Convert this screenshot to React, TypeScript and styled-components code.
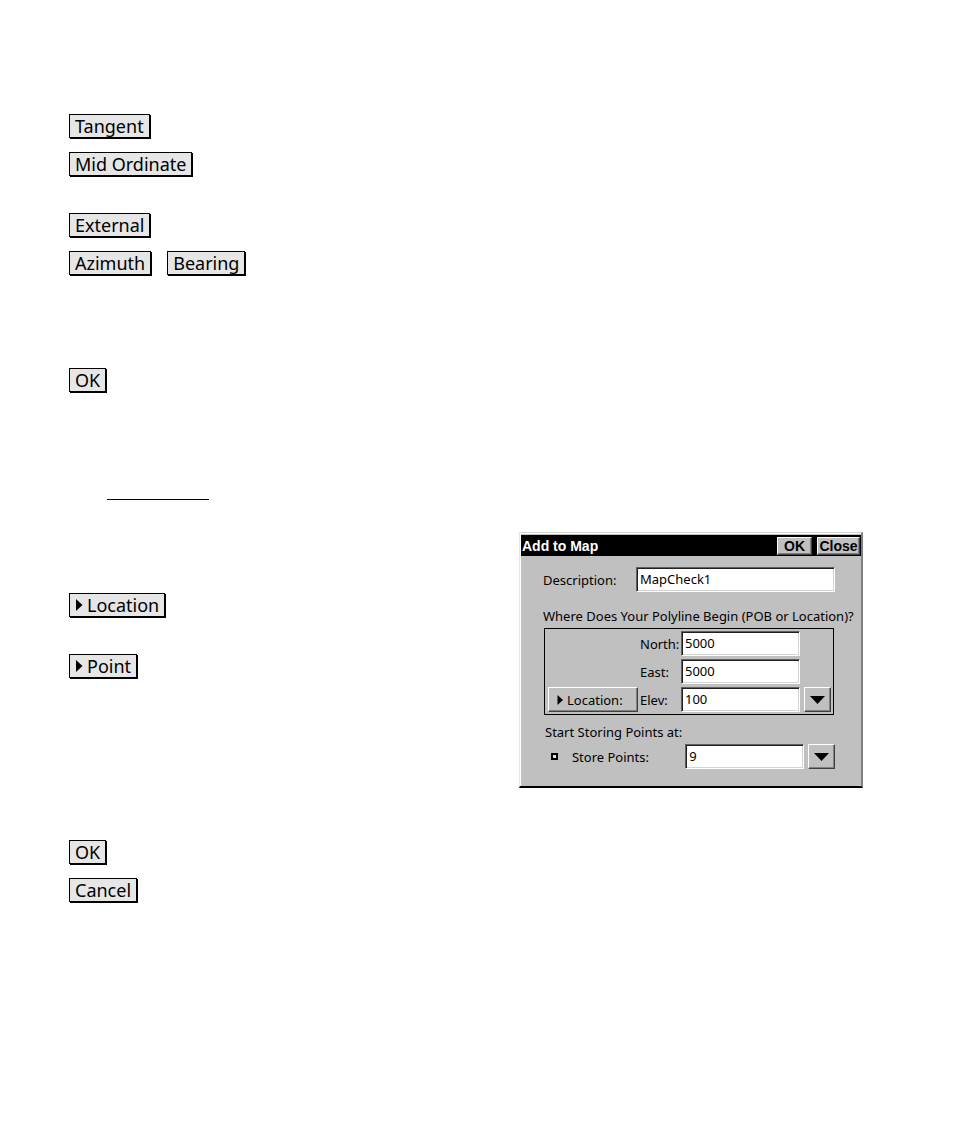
import React from "react";
import styled, { createGlobalStyle, css } from "styled-components";

const GlobalStyle = createGlobalStyle`
  *, *::before, *::after { box-sizing: border-box; }
  body { margin: 0; background: #fff; color: #000; }
  body, button, input { font-family: "Noto Sans", sans-serif; }
`;

const Page = styled.main`
  padding: 114px 91px 48px 69px;
`;

const KeyRow = styled.div<{ $after?: number }>`
  display: flex;
  gap: 16px;
  height: 24px;
  margin-bottom: ${(p) => p.$after ?? 14}px;
`;

const Key = styled.button`
  display: inline-flex;
  align-items: center;
  gap: 4px;
  height: 24px;
  padding: 0 5px;
  border: 1px solid #000;
  border-radius: 0;
  background: #e6e6e6;
  box-shadow: 1px 1px 0 #000;
  color: #000;
  font-size: 18px;
  line-height: 22px;
  white-space: nowrap;
`;

const Rule = styled.hr`
  width: 102px;
  height: 1px;
  margin: 0 0 32px 38px;
  border: 0;
  background: #000;
`;

const Columns = styled.div`
  display: flex;
  align-items: flex-start;
  justify-content: space-between;
  margin-bottom: 52px;
`;

const SideKeys = styled.div`
  padding-top: 61px;
`;

const Dialog = styled.section`
  width: 344px;
  flex: none;
  padding: 1px 0 0;
  border-style: solid;
  border-width: 1px 2px 2px 1px;
  border-color: #d4d4d4 #808080 #000 #e8e8e8;
  background: #c0c0c0;
  box-shadow: inset 1px 1px 0 #fff;
  font-size: 13px;
  line-height: 18px;
`;

const TitleBar = styled.header`
  display: flex;
  align-items: center;
  gap: 5px;
  height: 21px;
  margin: 1px 0 0 1px;
  padding: 0 1px;
  background: #000;
`;

const Title = styled.h1`
  flex: 1;
  margin: 0;
  color: #fff;
  font: bold 14px/18px "Liberation Sans", sans-serif;
`;

const raised = css`
  border: 1px solid;
  border-color: #fff #404040 #404040 #fff;
  border-radius: 0;
  background: #c0c0c0;
  box-shadow: inset -1px -1px 0 #808080;
  color: #000;
`;

const TitleButton = styled.button<{ $width: number }>`
  ${raised}
  width: ${(p) => p.$width}px;
  height: 18px;
  padding: 0;
  font: bold 14px/16px "Liberation Sans", sans-serif;
`;

const Form = styled.form`
  padding: 11px 26px 17px 23px;
`;

const DescriptionRow = styled.div`
  display: flex;
  align-items: center;
  justify-content: space-between;
`;

const Field = styled.input<{ $width: number }>`
  width: ${(p) => p.$width}px;
  height: 25px;
  padding: 0 3px 2px;
  border: 1px solid;
  border-color: #606060 #fff #fff #606060;
  border-radius: 0;
  background: #fff;
  box-shadow: inset 1px 1px 0 #202020, inset -1px -1px 0 #d4d4d4;
  color: #000;
  font-size: 13px;
  line-height: 18px;
`;

const Question = styled.p`
  margin: 15px 0 3px;
  white-space: nowrap;
`;

const Origin = styled.fieldset`
  display: grid;
  grid-template-columns: 90px 43px 119px 31px;
  grid-template-rows: repeat(3, 25px);
  row-gap: 3px;
  align-items: center;
  width: 290px;
  margin: 0 0 0 1px;
  padding: 2px 2px 2px 3px;
  border: 1px solid #000;
`;

const CoordLabel = styled.label`
  grid-column: 2;
  padding-left: 2px;
  white-space: nowrap;
`;

const LocationButton = styled.button`
  ${raised}
  grid-column: 1;
  grid-row: 3;
  display: flex;
  align-items: center;
  gap: 4px;
  height: 25px;
  padding: 0 8px;
  font-size: 13px;
  line-height: 18px;
`;

const DropButton = styled.button`
  ${raised}
  display: flex;
  align-items: center;
  justify-content: center;
  width: 27px;
  height: 25px;
  padding: 0;
  margin-left: 4px;
`;

const StoreHeading = styled.p`
  margin: 8px 0 3px 2px;
`;

const StoreRow = styled.div`
  display: flex;
  align-items: center;
  padding-left: 8px;
`;

const Marker = styled.input`
  appearance: none;
  width: 7px;
  height: 7px;
  margin: 0 14px 0 0;
  border: 2px solid #000;
  background: #e0e0e0;
`;

const StoreLabel = styled.label`
  width: 114px;
`;

const KeyArrow = () => (
  <svg width="8" height="12" viewBox="0 0 8 12" aria-hidden="true">
    <path d="M1 0 7.5 6 1 12Z" fill="#000" />
  </svg>
);

const SmallArrow = () => (
  <svg width="6" height="10" viewBox="0 0 6 10" aria-hidden="true">
    <path d="M0.5 0 6 5 0.5 10Z" fill="#000" />
  </svg>
);

const DownArrow = () => (
  <svg width="15" height="8" viewBox="0 0 15 8" aria-hidden="true">
    <path d="M0 0H15L7.5 8Z" fill="#000" />
  </svg>
);

const coordinates = [
  { id: "north", label: "North:", value: "5000" },
  { id: "east", label: "East:", value: "5000" },
  { id: "elev", label: "Elev:", value: "100" },
];

function AddToMap() {
  return (
    <Dialog aria-labelledby="dialog-title">
      <TitleBar>
        <Title id="dialog-title">Add to Map</Title>
        <TitleButton type="button" $width={35}>OK</TitleButton>
        <TitleButton type="button" $width={43}>Close</TitleButton>
      </TitleBar>
      <Form>
        <DescriptionRow>
          <label htmlFor="description">Description:</label>
          <Field id="description" $width={199} defaultValue="MapCheck1" />
        </DescriptionRow>
        <Question id="question">Where Does Your Polyline Begin (POB or Location)?</Question>
        <Origin aria-labelledby="question">
          {coordinates.map((c) => (
            <React.Fragment key={c.id}>
              <CoordLabel htmlFor={c.id}>{c.label}</CoordLabel>
              <Field id={c.id} $width={119} defaultValue={c.value} />
            </React.Fragment>
          ))}
          <LocationButton type="button">
            <SmallArrow />
            Location:
          </LocationButton>
          <DropButton type="button" aria-label="Choose elevation">
            <DownArrow />
          </DropButton>
        </Origin>
        <StoreHeading>Start Storing Points at:</StoreHeading>
        <StoreRow>
          <Marker type="checkbox" id="store" aria-label="Store points" />
          <StoreLabel htmlFor="store-at">Store Points:</StoreLabel>
          <Field id="store-at" $width={119} defaultValue="9" />
          <DropButton type="button" aria-label="Choose point">
            <DownArrow />
          </DropButton>
        </StoreRow>
      </Form>
    </Dialog>
  );
}

export default function App() {
  return (
    <>
      <GlobalStyle />
      <Page>
        <KeyRow><Key>Tangent</Key></KeyRow>
        <KeyRow $after={37}><Key>Mid Ordinate</Key></KeyRow>
        <KeyRow><Key>External</Key></KeyRow>
        <KeyRow $after={93}>
          <Key>Azimuth</Key>
          <Key>Bearing</Key>
        </KeyRow>
        <KeyRow $after={107}><Key>OK</Key></KeyRow>
        <Rule />
        <Columns>
          <SideKeys>
            <KeyRow $after={37}><Key><KeyArrow />Location</Key></KeyRow>
            <KeyRow><Key><KeyArrow />Point</Key></KeyRow>
          </SideKeys>
          <AddToMap />
        </Columns>
        <KeyRow><Key>OK</Key></KeyRow>
        <KeyRow><Key>Cancel</Key></KeyRow>
      </Page>
    </>
  );
}
